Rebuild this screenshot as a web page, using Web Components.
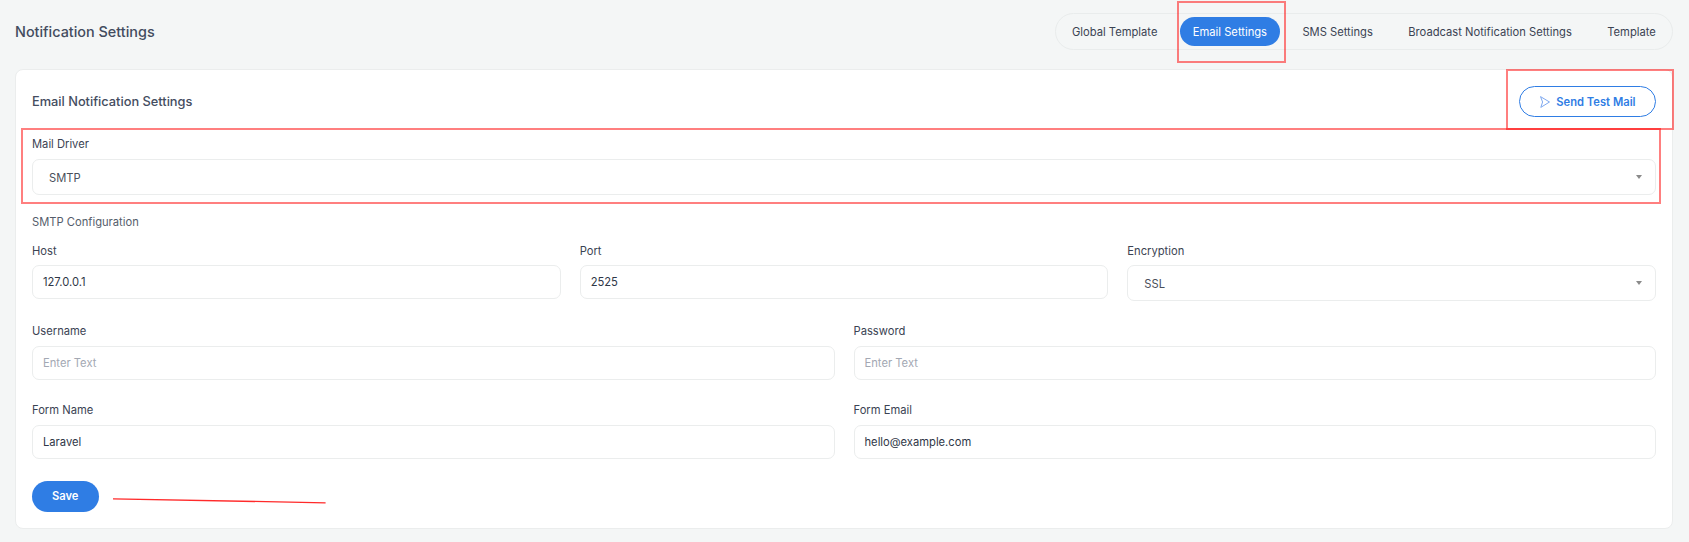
<!doctype html>
<html lang="en">
<head>
<meta charset="utf-8">
<title>Notification Settings</title>
<style>
  html,body{margin:0;background:#f4f6f6}
  body{font-family:Inter,"Liberation Sans",sans-serif;font-size:11.2px;color:#3b4353}
</style>
</head>
<body>
<settings-page>
  <span slot="title">Notification Settings</span>
  <tab-bar slot="tabs">
    <tab-item>Global Template</tab-item>
    <tab-item active>Email Settings</tab-item>
    <tab-item>SMS Settings</tab-item>
    <tab-item>Broadcast Notification Settings</tab-item>
    <tab-item>Template</tab-item>
  </tab-bar>
  <settings-card>
    <span slot="heading">Email Notification Settings</span>
    <pill-button slot="action" outline icon="send">Send Test Mail</pill-button>
    <form-row cols="1">
      <form-field label="Mail Driver"><select-box value="SMTP"></select-box></form-field>
    </form-row>
    <section-note>SMTP Configuration</section-note>
    <form-row cols="3" style="--label-gap:7px">
      <form-field label="Host"><text-box value="127.0.0.1"></text-box></form-field>
      <form-field label="Port"><text-box value="2525"></text-box></form-field>
      <form-field label="Encryption"><select-box value="SSL"></select-box></form-field>
    </form-row>
    <form-row cols="2">
      <form-field label="Username"><text-box placeholder="Enter Text"></text-box></form-field>
      <form-field label="Password"><text-box placeholder="Enter Text"></text-box></form-field>
    </form-row>
    <form-row cols="2">
      <form-field label="Form Name"><text-box value="Laravel"></text-box></form-field>
      <form-field label="Form Email"><text-box value="hello@example.com"></text-box></form-field>
    </form-row>
    <pill-button slot="footer">Save</pill-button>
  </settings-card>
  <red-box style="left:1177px;top:1px;width:109px;height:62px"></red-box>
  <red-box style="left:1506px;top:69px;width:168px;height:61px"></red-box>
  <red-box style="left:21px;top:128px;width:1640px;height:76px"></red-box>
  <red-stroke></red-stroke>
</settings-page>

<script>
(() => {
  "use strict";

  const shadow = (el, html) => {
    el.attachShadow({ mode: "open" }).innerHTML = html;
  };

  class SettingsPage extends HTMLElement {
    connectedCallback() {
      shadow(this, `
        <style>
          :host{display:block;position:relative;width:1689px;height:542px;overflow:hidden;box-sizing:border-box;padding:0 16px 0 15px}
          header{height:69px;display:flex;align-items:flex-start;justify-content:space-between}
          h1{margin:23px 0 0;font-size:14.4px;line-height:18px;font-weight:500;color:#434c5e}
          .tabs{margin-top:13px}
        </style>
        <header>
          <h1><slot name="title"></slot></h1>
          <div class="tabs"><slot name="tabs"></slot></div>
        </header>
        <slot></slot>`);
    }
  }

  class TabBar extends HTMLElement {
    connectedCallback() {
      shadow(this, `
        <style>
          :host{display:flex;gap:9px;height:37px;box-sizing:border-box;padding:3px;border:1px solid #e9ecec;border-radius:19px}
        </style>
        <slot></slot>`);
    }
  }

  class TabItem extends HTMLElement {
    connectedCallback() {
      shadow(this, `
        <style>
          :host{display:flex;align-items:center;box-sizing:border-box;height:29px;padding:1px 13.2px 0;border-radius:15px;font-size:11.2px;color:#3b4353;white-space:nowrap}
          :host([active]){background:#2f7de4;color:#fff}
        </style>
        <slot></slot>`);
    }
  }

  class SettingsCard extends HTMLElement {
    connectedCallback() {
      shadow(this, `
        <style>
          :host{display:block;box-sizing:border-box;height:460px;padding:16px;background:#fff;border:1px solid #ebeded;border-radius:8px}
          .top{display:flex;justify-content:space-between;align-items:center;height:31px;margin-bottom:20px}
          h2{margin:0;font-size:12.8px;line-height:16px;font-weight:500;color:#444d5f}
          .foot{margin-top:22px}
        </style>
        <div class="top">
          <h2><slot name="heading"></slot></h2>
          <slot name="action"></slot>
        </div>
        <slot></slot>
        <div class="foot"><slot name="footer"></slot></div>`);
    }
  }

  class FormRow extends HTMLElement {
    connectedCallback() {
      const cols = this.getAttribute("cols") || 1;
      shadow(this, `
        <style>
          :host{display:grid;grid-template-columns:repeat(${cols},minmax(0,1fr));column-gap:19px;margin-bottom:23px}
          :host(:last-of-type){margin-bottom:0}
        </style>
        <slot></slot>`);
    }
  }

  class FormField extends HTMLElement {
    connectedCallback() {
      shadow(this, `
        <style>
          :host{display:block}
          label{display:block;height:14px;line-height:14px;margin-bottom:var(--label-gap,8px);font-size:11.2px;color:#3b4353}
        </style>
        <label>${this.getAttribute("label")}</label>
        <slot></slot>`);
    }
  }

  class SectionNote extends HTMLElement {
    connectedCallback() {
      shadow(this, `
        <style>
          :host{display:block;height:14px;line-height:14px;margin:-3px 0 15px;font-size:11.2px;color:#555d6b}
        </style>
        <slot></slot>`);
    }
  }

  class TextBox extends HTMLElement {
    connectedCallback() {
      const value = this.getAttribute("value");
      const text = value || this.getAttribute("placeholder") || "";
      shadow(this, `
        <style>
          :host{display:flex;align-items:center;box-sizing:border-box;height:34px;padding:0 10px;background:#fff;border:1px solid #ebeded;border-radius:7px;font-size:11.2px;color:#2f3747}
          .ph{color:#a3a8b3}
        </style>
        <span class="${value ? "" : "ph"}">${text}</span>`);
    }
  }

  class SelectBox extends HTMLElement {
    connectedCallback() {
      shadow(this, `
        <style>
          :host{display:flex;align-items:center;justify-content:space-between;box-sizing:border-box;height:36px;padding:0 13px 0 16px;background:#fff;border:1px solid #ebeded;border-radius:7px;font-size:11.2px;color:#4a4f5a}
          span{padding-top:2px}
          svg{display:block}
        </style>
        <span>${this.getAttribute("value")}</span>
        <svg width="6" height="4" viewBox="0 0 6 4"><path d="M0 0h6L3 4z" fill="#8a8a8a"/></svg>`);
    }
  }

  class PillButton extends HTMLElement {
    connectedCallback() {
      const icon = this.getAttribute("icon") === "send"
        ? `<svg width="10" height="12" viewBox="0 0 10 12" fill="none" stroke="#7ea8ef" stroke-width="1" stroke-linejoin="round"><path d="M.5.6 9.5 6 .8 11.4 2.6 6z"/></svg>`
        : "";
      shadow(this, `
        <style>
          :host{display:inline-flex;align-items:center;gap:6.5px;box-sizing:border-box;height:31px;padding:0 20px 1px;border-radius:16px;background:#2f7de4;color:#fff;font-size:11.2px;font-weight:600;white-space:nowrap}
          :host([outline]){padding:0 19.5px 0 20px;background:#fff;color:#2f7de4;border:1px solid #2f7de4}
          svg{display:block}
        </style>
        ${icon}<slot></slot>`);
    }
  }

  // reviewer's marks drawn over the screenshot
  class RedBox extends HTMLElement {
    connectedCallback() {
      shadow(this, `
        <style>
          :host{position:absolute;box-sizing:border-box;border:2px solid rgba(255,0,0,.5);pointer-events:none}
        </style>`);
    }
  }

  class RedStroke extends HTMLElement {
    connectedCallback() {
      shadow(this, `
        <style>
          :host{position:absolute;left:113px;top:497px;width:214px;height:8px;pointer-events:none}
          svg{display:block}
        </style>
        <svg width="214" height="8" viewBox="0 0 214 8">
          <path d="M0 1.8 212.6 5.8" stroke="#ff2a2a" stroke-width="1.3" fill="none"/>
        </svg>`);
    }
  }

  customElements.define("settings-page", SettingsPage);
  customElements.define("tab-bar", TabBar);
  customElements.define("tab-item", TabItem);
  customElements.define("settings-card", SettingsCard);
  customElements.define("form-row", FormRow);
  customElements.define("form-field", FormField);
  customElements.define("section-note", SectionNote);
  customElements.define("text-box", TextBox);
  customElements.define("select-box", SelectBox);
  customElements.define("pill-button", PillButton);
  customElements.define("red-box", RedBox);
  customElements.define("red-stroke", RedStroke);
})();
</script>
</body>
</html>
